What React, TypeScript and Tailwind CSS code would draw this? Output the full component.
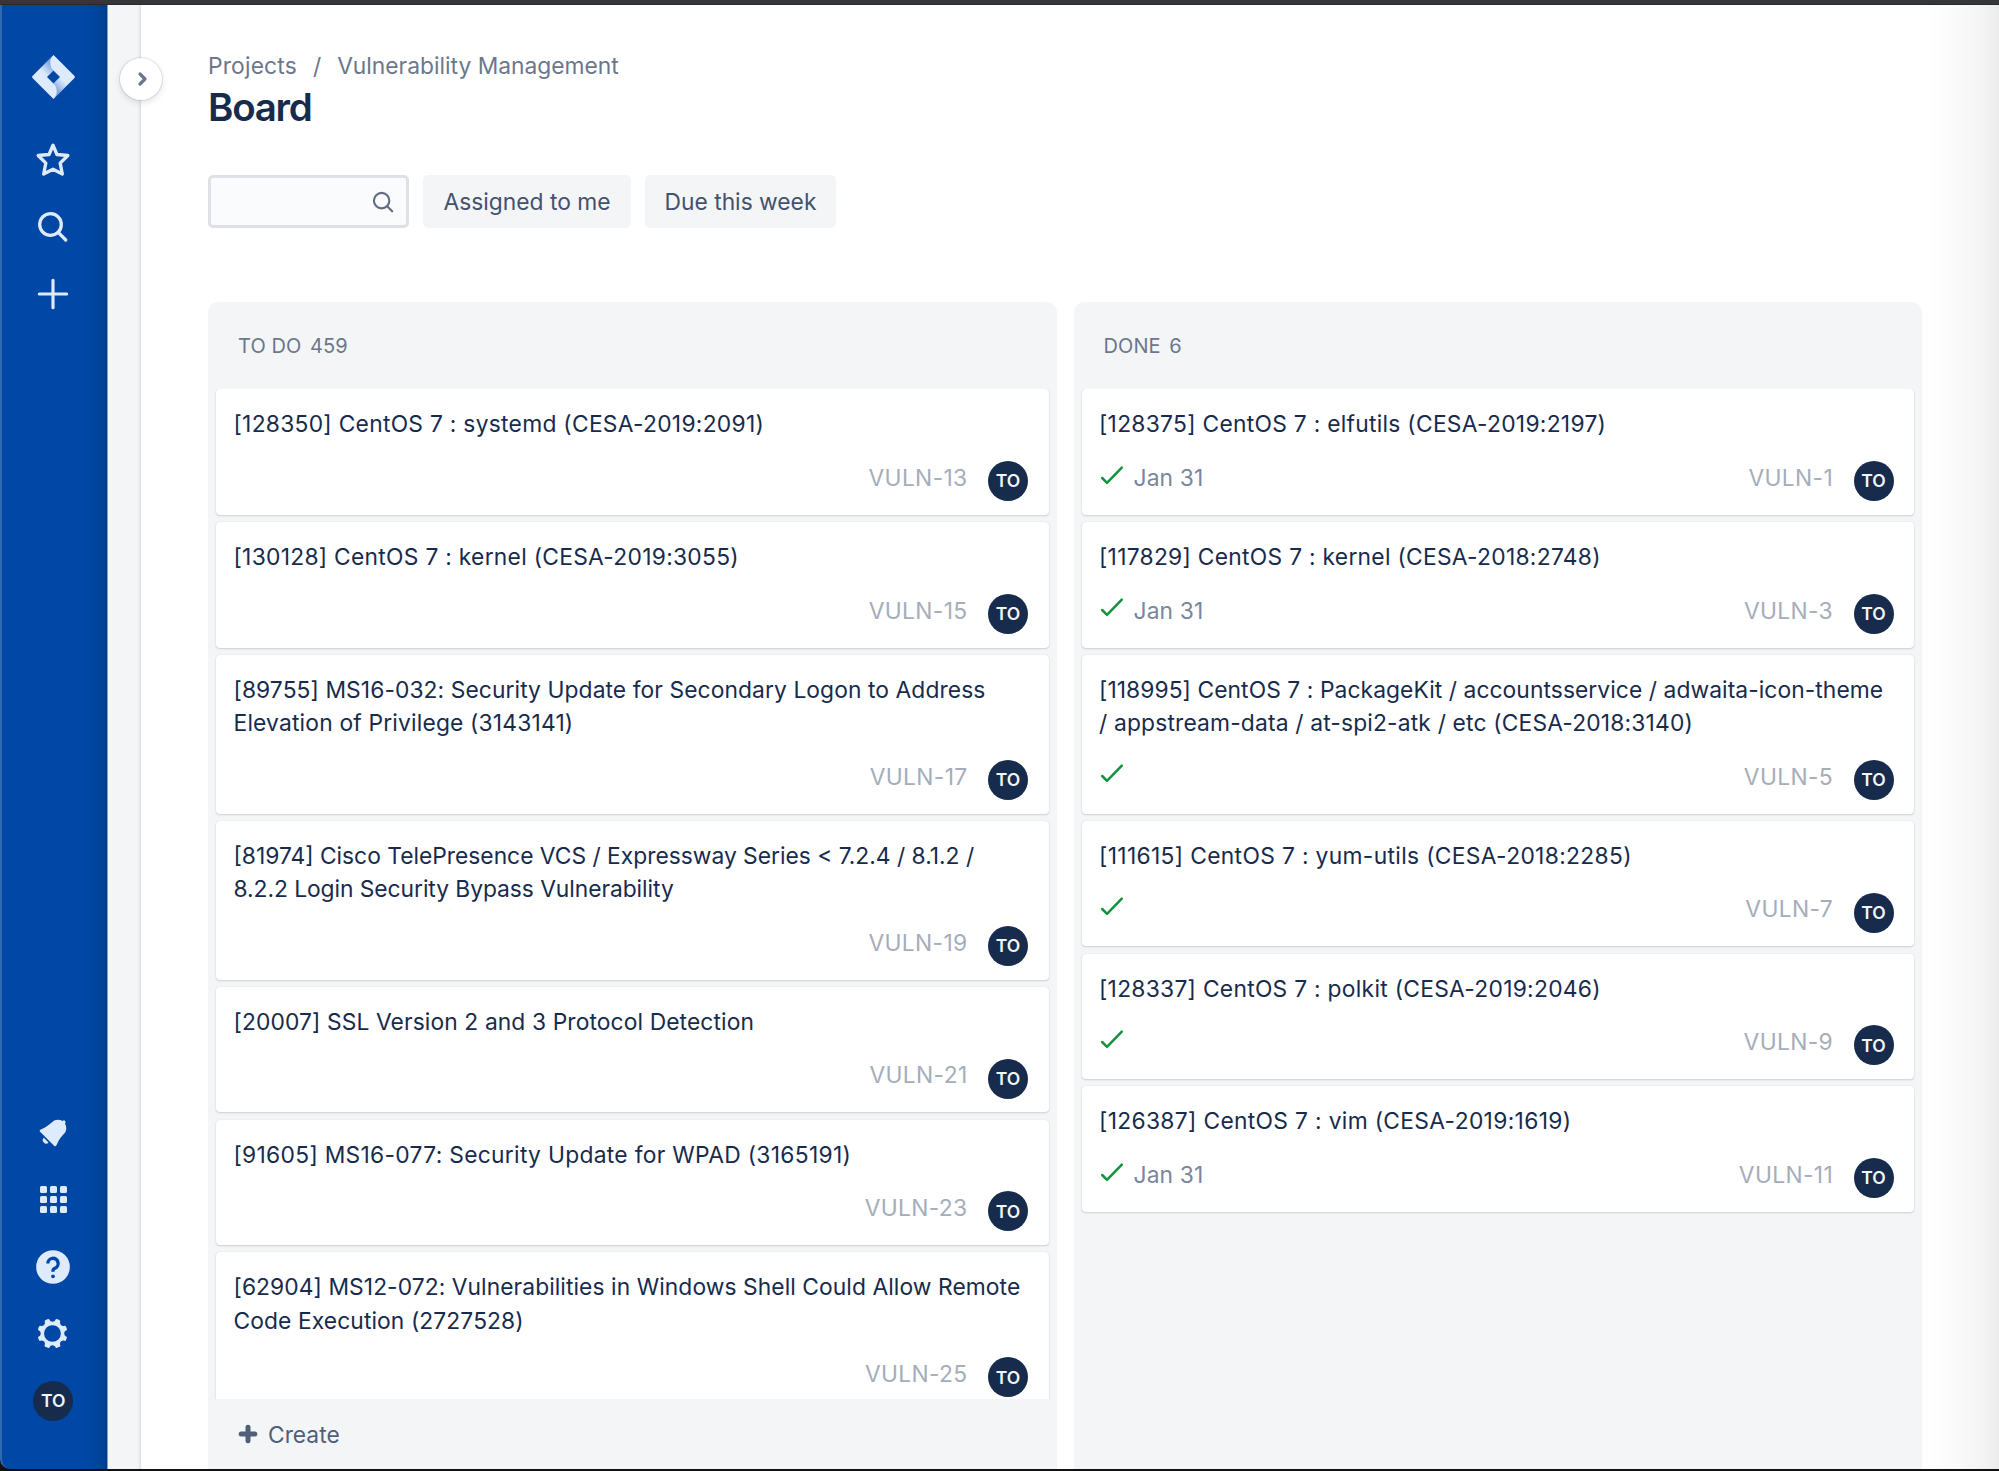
import React from "react";

type Card = { title: string[]; id: string; ls: string[]; done?: boolean; due?: string };

const todo: Card[] = [
  { title: ["[128350] CentOS 7 : systemd (CESA-2019:2091)"], ls: ["tracking-[0.28px]"], id: "VULN-13" },
  { title: ["[130128] CentOS 7 : kernel (CESA-2019:3055)"], ls: ["tracking-[0.28px]"], id: "VULN-15" },
  { title: ["[89755] MS16-032: Security Update for Secondary Logon to Address", "Elevation of Privilege (3143141)"], ls: ["tracking-[0.086px]", "tracking-[0.18px]"], id: "VULN-17" },
  { title: ["[81974] Cisco TelePresence VCS / Expressway Series < 7.2.4 / 8.1.2 /", "8.2.2 Login Security Bypass Vulnerability"], ls: ["tracking-[0px]", "tracking-[-0.05px]"], id: "VULN-19" },
  { title: ["[20007] SSL Version 2 and 3 Protocol Detection"], ls: ["tracking-[0.11px]"], id: "VULN-21" },
  { title: ["[91605] MS16-077: Security Update for WPAD (3165191)"], ls: ["tracking-[0.3px]"], id: "VULN-23" },
  { title: ["[62904] MS12-072: Vulnerabilities in Windows Shell Could Allow Remote", "Code Execution (2727528)"], ls: ["tracking-[0.074px]", "tracking-[0.1px]"], id: "VULN-25" },
];

const done: Card[] = [
  { title: ["[128375] CentOS 7 : elfutils (CESA-2019:2197)"], ls: ["tracking-[0.28px]"], id: "VULN-1", done: true, due: "Jan 31" },
  { title: ["[117829] CentOS 7 : kernel (CESA-2018:2748)"], ls: ["tracking-[0.28px]"], id: "VULN-3", done: true, due: "Jan 31" },
  { title: ["[118995] CentOS 7 : PackageKit / accountsservice / adwaita-icon-theme", "/ appstream-data / at-spi2-atk / etc (CESA-2018:3140)"], ls: ["tracking-[0.074px]", "tracking-[0.17px]"], id: "VULN-5", done: true },
  { title: ["[111615] CentOS 7 : yum-utils (CESA-2018:2285)"], ls: ["tracking-[0.34px]"], id: "VULN-7", done: true },
  { title: ["[128337] CentOS 7 : polkit (CESA-2019:2046)"], ls: ["tracking-[0.28px]"], id: "VULN-9", done: true },
  { title: ["[126387] CentOS 7 : vim (CESA-2019:1619)"], ls: ["tracking-[0.33px]"], id: "VULN-11", done: true, due: "Jan 31" },
];

function Avatar() {
  return (
    <div className="flex h-10 w-10 shrink-0 items-center justify-center rounded-full bg-[#172B4D] text-[17.5px] leading-none font-semibold text-[#f4f5f7]">
      TO
    </div>
  );
}

function CardView({ card }: { card: Card }) {
  return (
    <article className="shrink-0 rounded-[4px] bg-white pt-[18px] pr-[20.5px] pb-[13.7px] pl-[17.5px] shadow-[0_1px_2px_rgba(23,30,45,0.16),0_0_1px_rgba(23,30,45,0.16)]">
      <h3 className="text-[22.8px] leading-[33.2px] whitespace-nowrap text-[#172B4D]">
        {card.title.map((line, i) => (
          <span key={line} className={"block " + card.ls[i]}>{line}</span>
        ))}
      </h3>
      <div className="mt-[20.6px] flex h-10 items-center">
        {card.done && (
          <svg className="mb-[13px] ml-[1px] h-[20px] w-[24px] shrink-0" viewBox="0 0 24 20" fill="none" stroke="#14933f" strokeWidth="2.5" strokeLinecap="round" strokeLinejoin="round">
            <path d="M2.2 13 7 17.8 21.8 2.6" />
          </svg>
        )}
        {card.due && <span className="mb-[5.5px] ml-[9.5px] text-[22.8px] leading-none tracking-[0.15px] text-[#7A869A]">{card.due}</span>}
        <span className="mb-[5.5px] ml-auto pr-[20.5px] text-[22.8px] leading-none tracking-[0.34px] text-[#A5ADBA]">{card.id}</span>
        <Avatar />
      </div>
    </article>
  );
}

function Column({ name, count, cards, create }: { name: string; count: string; cards: Card[]; create?: boolean }) {
  return (
    <section className="flex min-w-0 flex-1 flex-col rounded-t-[10px] bg-[#F4F5F7]">
      <header className="flex h-[87px] shrink-0 items-center gap-[8.5px] pt-px pl-[30px] text-[20px] leading-none tracking-[0.1px] text-[#6B778C]">
        <span>{name}</span>
        <span>{count}</span>
      </header>
      <div className="flex min-h-0 flex-1 flex-col gap-[7.3px] overflow-hidden px-[8px] pt-[0.3px]">
        {cards.map((c) => (
          <CardView key={c.id} card={c} />
        ))}
      </div>
      {create && (
        <button className="flex h-[70px] shrink-0 items-center gap-[10.5px] pt-[2px] pl-[29.5px] text-[22.8px] text-[#505F79]">
          <svg className="mb-[2px] h-[20px] w-[20px]" viewBox="0 0 20 20" stroke="currentColor" strokeWidth="5" strokeLinecap="round">
            <path d="M10 3.2v13.6M3.2 10h13.6" />
          </svg>
          <span>Create</span>
        </button>
      )}
    </section>
  );
}

function NavItem({ children }: { children: React.ReactNode }) {
  return <div className="flex h-[67.1px] shrink-0 items-center justify-center">{children}</div>;
}

const ICON = "h-10 w-10";

function Sidebar() {
  return (
    <nav className="flex w-[108px] shrink-0 flex-col rounded-bl-[10px] border-r border-l-2 border-r-[#7f9fcc] border-l-[#2f68b3] bg-[linear-gradient(to_right,#0047A6_0,#0047A6_82px,#00439c_95px,#003d8f_105px)] pt-[50px] pr-[2.5px] pb-[34.5px] text-[#DEEBFF]">
      <div className="mb-[27.5px] flex justify-center">
        <svg className="h-[44px] w-[43px]" viewBox="0 0 73.3 75.76">
          <defs>
            <linearGradient id="ja" x1="34.64" y1="15.35" x2="19" y2="30.99" gradientUnits="userSpaceOnUse">
              <stop offset="0.1" stopColor="#0047A6" stopOpacity="0.4" />
              <stop offset="1" stopColor="#0047A6" stopOpacity="0" />
            </linearGradient>
            <linearGradient id="jb" x1="38.78" y1="60.28" x2="54.39" y2="44.67" gradientUnits="userSpaceOnUse">
              <stop offset="0.1" stopColor="#0047A6" stopOpacity="0.4" />
              <stop offset="1" stopColor="#0047A6" stopOpacity="0" />
            </linearGradient>
          </defs>
          <path fill="#DEEBFF" d="M72.4 35.76 39.8 3.16 36.64 0 12.1 24.54.88 35.76a3 3 0 0 0 0 4.24L23.3 62.42l13.34 13.34 24.54-24.54.38-.38L72.4 40a3 3 0 0 0 0-4.24zM36.64 49.08l-11.2-11.2 11.2-11.2 11.2 11.2z" />
          <path fill="url(#ja)" d="M36.64 26.68A18.86 18.86 0 0 1 36.56.09L12.05 24.59l13.34 13.34z" />
          <path fill="url(#jb)" d="M47.87 37.85 36.64 49.08a18.86 18.86 0 0 1 0 26.68l24.57-24.57z" />
        </svg>
      </div>
      <NavItem>
        <svg className={ICON} viewBox="0 0 24 24" fill="none" stroke="currentColor" strokeWidth="2" strokeLinejoin="round">
          <path d="M12 3.1 14.35 8.7 20.9 9.3 16.3 13.9 17.6 20.4 12 17.5 6.4 20.4 7.7 13.9 3.1 9.3 9.65 8.7Z" />
        </svg>
      </NavItem>
      <NavItem>
        <svg className={ICON} viewBox="0 0 24 24" fill="currentColor">
          <path d="M16.436 15.085l3.94 4.01a1 1 0 0 1-1.425 1.402l-3.938-4.006a7.5 7.5 0 1 1 1.423-1.406zM10.5 16a5.5 5.5 0 1 0 0-11 5.5 5.5 0 0 0 0 11z" />
        </svg>
      </NavItem>
      <NavItem>
        <svg className={ICON} viewBox="0 0 24 24" stroke="currentColor" strokeWidth="1.9" strokeLinecap="round">
          <path d="M12 3.8v16.4M3.8 12h16.4" />
        </svg>
      </NavItem>
      <div className="flex-1" />
      <NavItem>
        <svg className={ICON} viewBox="0 0 24 24" fill="currentColor">
          <path d="M6.485 17.669a2 2 0 0 0 2.829 0l-2.829-2.83a2 2 0 0 0 0 2.83zm4.897-12.191l-.725.725c-.782.782-2.21 1.813-3.206 2.311l-3.017 1.509c-.495.248-.584.774-.187 1.171l8.556 8.556c.398.396.922.313 1.171-.188l1.51-3.016c.494-.988 1.526-2.42 2.311-3.206l.725-.726a5.048 5.048 0 0 0 .64-6.356 1.01 1.01 0 1 0-1.354-1.494c-.023.025-.046.049-.066.075a5.043 5.043 0 0 0-2.788-.84 5.036 5.036 0 0 0-3.57 1.478z" />
        </svg>
      </NavItem>
      <NavItem>
        <div className="grid grid-cols-3 gap-[3px]">
          {Array.from({ length: 9 }, (_, i) => (
            <span key={i} className="h-[7px] w-[7px] rounded-[1.5px] bg-[#DEEBFF]" />
          ))}
        </div>
      </NavItem>
      <NavItem>
        <svg className={ICON} viewBox="0 0 24 24" fill="none">
          <circle cx="12" cy="12" r="10.1" fill="currentColor" />
          <path d="M8.9 9.9a3.1 3.1 0 1 1 4.1 2.9c-.7.25-1 .55-1 1.2v.9" stroke="#0047A6" strokeWidth="2" />
          <circle cx="12" cy="17.6" r="1.15" fill="#0047A6" />
        </svg>
      </NavItem>
      <NavItem>
        <svg className={ICON} viewBox="0 0 24 24" fill="currentColor" fillRule="evenodd">
          <path d="M11.701 16.7a5.002 5.002 0 1 1 0-10.003 5.002 5.002 0 0 1 0 10.004m8.368-3.117a1.995 1.995 0 0 1-1.346-1.885c0-.876.563-1.613 1.345-1.885a.48.48 0 0 0 .315-.574 8.947 8.947 0 0 0-.836-1.993.477.477 0 0 0-.598-.195 2.04 2.04 0 0 1-1.29.08 1.988 1.988 0 0 1-1.404-1.395 2.04 2.04 0 0 1 .076-1.297.478.478 0 0 0-.196-.597 8.98 8.98 0 0 0-1.975-.826.479.479 0 0 0-.574.314 1.995 1.995 0 0 1-1.885 1.346 1.994 1.994 0 0 1-1.884-1.345.482.482 0 0 0-.575-.315c-.708.2-1.379.485-2.004.842a.47.47 0 0 0-.198.582A2.002 2.002 0 0 1 4.445 7.06a.478.478 0 0 0-.595.196 8.946 8.946 0 0 0-.833 1.994.48.48 0 0 0 .308.572 1.995 1.995 0 0 1 1.323 1.877c0 .867-.552 1.599-1.324 1.877a.479.479 0 0 0-.308.57 8.99 8.99 0 0 0 .723 1.79.477.477 0 0 0 .624.194c.595-.273 1.343-.264 2.104.238.117.077.225.185.302.3.527.8.512 1.58.198 2.188a.473.473 0 0 0 .168.628 8.946 8.946 0 0 0 2.11.897.474.474 0 0 0 .57-.313 1.995 1.995 0 0 1 1.886-1.353c.878 0 1.618.567 1.887 1.353a.475.475 0 0 0 .57.313 8.964 8.964 0 0 0 2.084-.883.473.473 0 0 0 .167-.631c-.318-.608-.337-1.393.191-2.195.077-.116.185-.225.302-.302.772-.511 1.527-.513 2.125-.23a.477.477 0 0 0 .628-.19 8.925 8.925 0 0 0 .728-1.793.478.478 0 0 0-.314-.573" />
        </svg>
      </NavItem>
      <NavItem>
        <Avatar />
      </NavItem>
    </nav>
  );
}

export default function App() {
  return (
    <div className="flex h-[1471px] w-[1999px] flex-col overflow-hidden bg-[#111] font-['Inter',sans-serif]">
      <div className="h-[5px] shrink-0 border-b border-[#2a2a2c] bg-[#35363A]" />
      <div className="mb-[2px] flex min-h-0 flex-1">
        <Sidebar />
        <div className="relative w-[33px] shrink-0 bg-[linear-gradient(to_right,#F4F5F7_0,#F4F5F7_30px,#dcdddf_33px)]">
          <button className="absolute top-[53px] left-[12px] z-10 flex h-[42px] w-[42px] items-center justify-center rounded-full bg-white shadow-[0_0_0_1px_rgba(9,30,66,0.1),0_3px_6px_rgba(9,30,66,0.12)]">
            <svg className="ml-[1.5px] h-[16px] w-[12px]" viewBox="0 0 12 16" fill="none" stroke="#6B778C" strokeWidth="3.2" strokeLinecap="round" strokeLinejoin="round">
              <path d="M4 3l5 5-5 5" />
            </svg>
          </button>
        </div>
        <main className="flex min-w-0 flex-1 flex-col bg-[linear-gradient(to_right,#fff_0,#fff_1785px,#fafafa_1815px,#f5f5f5_1838px,#ebebeb_1858px)] pr-[77px] pl-[67px]">
          <div className="mt-[45px] flex h-[33px] items-center text-[22.8px] text-[#6B778C]">
            <span className="tracking-[0.17px]">Projects</span>
            <span className="mx-[16px]">/</span>
            <span>Vulnerability Management</span>
          </div>
          <h1 className="mt-px text-[38.5px] leading-[46px] font-semibold tracking-[-1.25px] text-[#172B4D]">Board</h1>
          <div className="mt-[45px] flex h-[53px] gap-[14px]">
            <div className="flex w-[201px] items-center justify-end rounded-[5px] border-[3px] border-[#DFE1E6] bg-[#FAFBFC] pr-[12.5px]">
              <svg className="h-[22px] w-[22px]" viewBox="0 0 24 24" fill="none" stroke="#5E6C84" strokeWidth="2.3" strokeLinecap="round">
                <circle cx="10.5" cy="10.5" r="8.4" />
                <path d="M16.6 16.6 22 22.2" />
              </svg>
            </div>
            <button className="w-[208px] rounded-[5px] bg-[#F4F5F7] pt-[2px] text-[22.8px] text-[#42526E]">Assigned to me</button>
            <button className="w-[191px] rounded-[5px] bg-[#F4F5F7] pt-[2px] text-[22.8px] text-[#42526E]">Due this week</button>
          </div>
          <div className="mt-[74px] flex min-h-0 flex-1 gap-[17px]">
            <Column name="TO DO" count="459" cards={todo} create />
            <Column name="DONE" count="6" cards={done} />
          </div>
        </main>
      </div>
    </div>
  );
}
